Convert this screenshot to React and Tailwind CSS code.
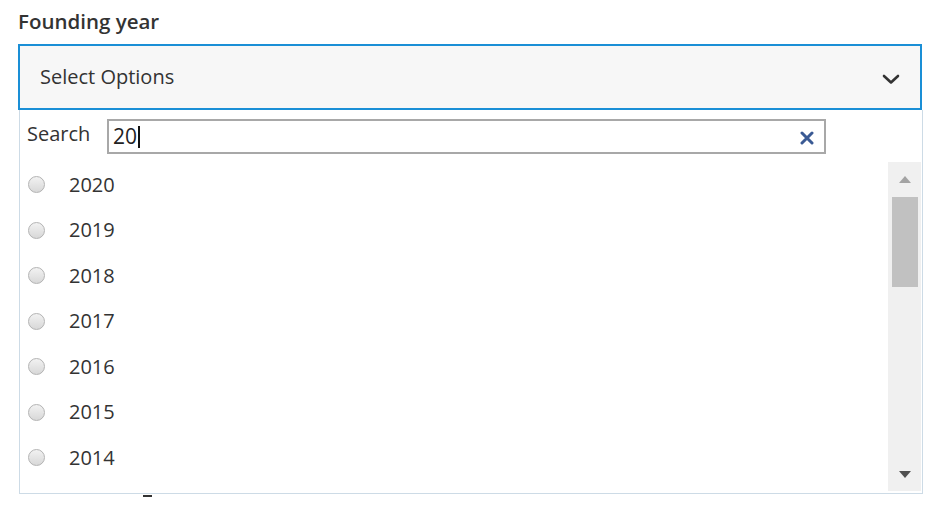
import React from "react";

const years = ["2020", "2019", "2018", "2017", "2016", "2015", "2014"];

export default function App() {
  return (
    <div
      className="w-[941px] h-[508px] bg-white pl-[18px] pt-[10px] text-[#333]"
      style={{ fontFamily: '"Open Sans", "Liberation Sans", sans-serif' }}
    >
      <div className="text-[20.5px] leading-[22px] font-semibold text-[#333]">Founding year</div>
      <div className="mt-[12px] w-[904px] h-[66px] border-2 border-[#1a8fd6] bg-[#f7f7f7] flex items-center justify-between pl-[20px] pr-[20px]">
        <span className="text-[20px] text-[#333]">Select Options</span>
        <svg width="18" height="11" viewBox="0 0 18 11" className="mt-[4px]">
          <path d="M2 2 L9 8.5 L16 2" fill="none" stroke="#333" strokeWidth="2.6" strokeLinecap="round" strokeLinejoin="round" />
        </svg>
      </div>
      <div className="ml-[1px] w-[904px] h-[384px] border border-t-0 border-[#cddbe6] flex flex-col">
        <div className="flex items-center pt-[9px] pl-[7px]">
          <span className="text-[20px] leading-[24px] text-[#333] w-[80px] mb-[6px]">Search</span>
          <div className="w-[719px] h-[35px] border-2 border-[#a8a8a8] bg-white flex items-center justify-between pl-[4px] pr-[10px]">
            <span className="flex items-center text-[21px] text-[#222]">
              20<span className="inline-block w-[2px] h-[22px] bg-[#111] ml-[1px]"></span>
            </span>
            <svg width="14" height="14" viewBox="0 0 14 14" className="mt-[3px]">
              <path d="M2 2 L12 12 M12 2 L2 12" stroke="#3a5a94" strokeWidth="3" strokeLinecap="round" />
            </svg>
          </div>
        </div>
        <div className="flex flex-1 mt-[8px] mb-[2px]">
          <div className="flex-1 flex flex-col">
            {years.map((y) => (
              <div key={y} className="h-[45.5px] flex items-center">
                <span className="ml-[8px] w-[17px] h-[17px] rounded-full border border-[#b3b3b3] bg-gradient-to-b from-[#f2f2f2] to-[#d8d8d8]"></span>
                <span className="ml-[24px] text-[20px] text-[#333]">{y}</span>
              </div>
            ))}
          </div>
          <div className="w-[33px] mr-[1px] bg-[#f0f0f0] flex flex-col items-center">
            <svg width="12" height="7" viewBox="0 0 12 7" className="mt-[14px]">
              <path d="M0 7 L6 0 L12 7 Z" fill="#a3a3a3" />
            </svg>
            <div className="mt-[14px] w-[26px] h-[90px] bg-[#c1c1c1]"></div>
            <div className="flex-1"></div>
            <svg width="12" height="7" viewBox="0 0 12 7" className="mb-[13px]">
              <path d="M0 0 L6 7 L12 0 Z" fill="#505050" />
            </svg>
          </div>
        </div>
      </div>
      <div className="ml-[125px] mt-[1px] w-[9px] h-[2px] bg-[#333]"></div>
    </div>
  );
}
